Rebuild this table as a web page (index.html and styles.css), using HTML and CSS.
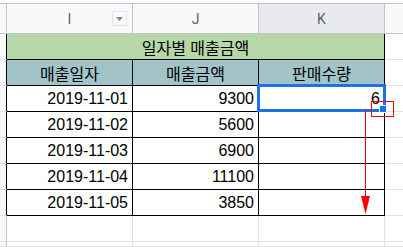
FILE: index.html
```html
<!DOCTYPE html>
<html lang="ko">
<head>
<meta charset="utf-8">
<link rel="stylesheet" href="styles.css">
</head>
<body>
<div class="sheet">
  <div class="grid">
    <div class="ch corner"></div>
    <div class="ch col">I<span class="dd"><svg width="7" height="4" viewBox="0 0 7 4"><path d="M0 0H7L3.5 4Z" fill="#80868b"/></svg></span></div>
    <div class="ch col">J</div>
    <div class="ch col sel">K</div>
    <div class="ch col last"></div>

    <div class="rh tb"></div>
    <div class="c title">일자별 매출금액</div>
    <div class="c out"></div>

    <div class="rh tb"></div>
    <div class="c hdr">매출일자</div>
    <div class="c hdr">매출금액</div>
    <div class="c hdr">판매수량</div>
    <div class="c out"></div>

    <div class="rh tb selrow"></div>
    <div class="c num">2019-11-01</div>
    <div class="c num">9300</div>
    <div class="c num active">6<div class="selbox"></div><div class="handle"></div></div>
    <div class="c out"></div>

    <div class="rh tb"></div>
    <div class="c num">2019-11-02</div>
    <div class="c num">5600</div>
    <div class="c num"></div>
    <div class="c out"></div>

    <div class="rh tb"></div>
    <div class="c num">2019-11-03</div>
    <div class="c num">6900</div>
    <div class="c num"></div>
    <div class="c out"></div>

    <div class="rh tb"></div>
    <div class="c num">2019-11-04</div>
    <div class="c num">11100</div>
    <div class="c num"></div>
    <div class="c out"></div>

    <div class="rh tb"></div>
    <div class="c num">2019-11-05</div>
    <div class="c num">3850</div>
    <div class="c num"></div>
    <div class="c out"></div>

    <div class="rh"></div>
    <div class="c empty"></div>
    <div class="c empty"></div>
    <div class="c empty"></div>
    <div class="c out"></div>

    <div class="rh"></div>
    <div class="c empty"></div>
    <div class="c empty"></div>
    <div class="c empty"></div>
    <div class="c out"></div>
  </div>
  <svg class="annot" width="403" height="247" viewBox="0 0 403 247">
    <rect x="371.5" y="101.5" width="22" height="15" fill="none" stroke="#ff0000" stroke-width="1"/>
    <line x1="365.5" y1="110" x2="365.5" y2="198" stroke="#ff0000" stroke-width="1"/>
    <path d="M361 196H370L365.5 214Z" fill="#ff0000"/>
  </svg>
</div>
</body>
</html>
```

FILE: styles.css
```css
* { box-sizing: border-box; }
html, body { margin: 0; padding: 0; background: #fff; }
body { width: 403px; height: 247px; overflow: hidden; }
.sheet { position: relative; width: 403px; height: 247px; padding-top: 3px; }
.grid {
  display: grid;
  grid-template-columns: 7px 126px 126px 126px 1fr;
  grid-template-rows: 31px repeat(8, 26px) 1fr;
  height: 244px;
}
.ch {
  background: #f8f9fa;
  border-top: 1px solid #c4c7c5;
  border-bottom: 1px solid #c4c7c5;
  border-right: 1px solid #c4c7c5;
  font-family: Roboto, "Liberation Sans", sans-serif;
  font-size: 14px;
  color: #5f6368;
  display: flex;
  align-items: center;
  justify-content: center;
  position: relative;
}
.ch.last { border-right: none; }
.ch.sel { background: #e8eaed; color: #5f6368; }
.dd {
  position: absolute;
  right: 5px;
  top: 7px;
  width: 15px;
  height: 15px;
  border: 1px solid #e3e5e8;
  border-radius: 2px;
  background: #f8f9fa;
  display: flex;
  align-items: center;
  justify-content: center;
}
.rh {
  background: #f8f9fa;
  border-right: 1px solid #c4c7c5;
  border-bottom: 1px solid #e2e2e3;
}
.rh.tb { border-right-color: #000; }
.c {
  border-right: 1px solid #000;
  border-bottom: 1px solid #000;
  display: flex;
  align-items: center;
  font-size: 16px;
  color: #000;
}
.title {
  grid-column: span 3;
  background: #b6d7a8;
  justify-content: center;
  font-family: "Noto Sans CJK KR", "Liberation Sans", sans-serif;
}
.hdr {
  background: #a2c4c9;
  justify-content: center;
  font-family: "Noto Sans CJK KR", "Liberation Sans", sans-serif;
}
.num {
  justify-content: flex-end;
  padding-right: 4px;
  padding-top: 1px;
  font-family: "Liberation Sans", Arial, sans-serif;
}
.empty { border-right-color: #e2e2e3; border-bottom-color: #e2e2e3; }
.out { border-right: none; border-bottom: 1px solid #e2e2e3; }
.active { position: relative; }
.selbox {
  position: absolute;
  left: -2px;
  top: -2px;
  width: 129px;
  height: 28px;
  border: 3px solid #1a73e8;
}
.handle {
  position: absolute;
  left: 120px;
  top: 19px;
  width: 8px;
  height: 8px;
  background: #1a73e8;
  border: 1px solid #fff;
}
.annot { position: absolute; left: 0; top: 0; pointer-events: none; }
```
